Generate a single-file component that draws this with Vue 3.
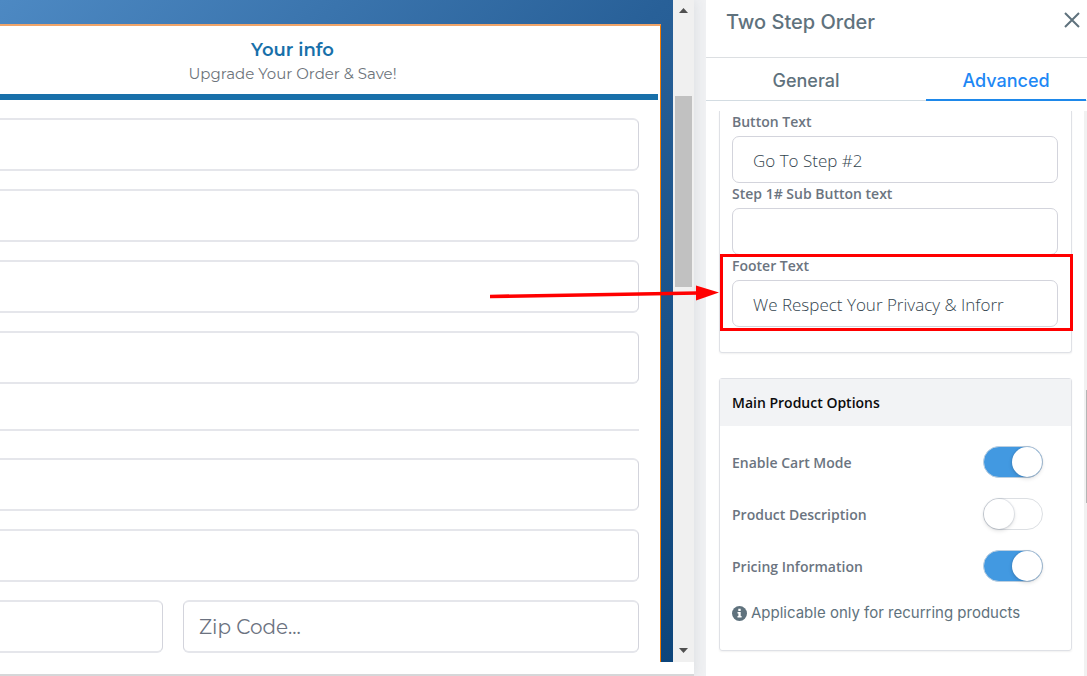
<script setup>
import { ref, reactive } from 'vue'

const fields = reactive(['', '', '', ''])
const address = reactive(['', ''])
const state = ref('')
const zip = ref('')

const activeTab = ref('Advanced')
const buttonText = ref('Go To Step #2')
const subButtonText = ref('')
const footerText = ref('We Respect Your Privacy & Inforr')

const options = reactive([
  { id: 'cart-mode', label: 'Enable Cart Mode', on: true },
  { id: 'description', label: 'Product Description', on: false },
  { id: 'pricing', label: 'Pricing Information', on: true },
])
</script>

<template>
  <div class="editor">
    <main class="preview">
      <div class="viewport">
        <div class="stage">
          <section class="order">
            <header class="step">
              <h2>Your info</h2>
              <p>Upgrade Your Order &amp; Save!</p>
            </header>
            <form class="form" @submit.prevent>
              <input v-for="(f, i) in fields" :key="'f' + i" v-model="fields[i]" class="field wide" type="text" :aria-label="'Contact field ' + (i + 1)" />
              <hr class="wide" />
              <input v-for="(f, i) in address" :key="'a' + i" v-model="address[i]" class="field wide" type="text" :aria-label="'Address field ' + (i + 1)" />
              <input v-model="state" class="field" type="text" aria-label="State" />
              <input v-model="zip" class="field" type="text" placeholder="Zip Code..." aria-label="Zip Code" />
            </form>
          </section>
        </div>
        <div class="scrollbar" aria-hidden="true">
          <svg width="9" height="5" viewBox="0 0 9 5"><path d="M4.500 0 9 5H0z" fill="#505050" /></svg>
          <div class="track"><div class="thumb"></div></div>
          <svg width="9" height="5" viewBox="0 0 9 5"><path d="M0 0h9L4.500 5z" fill="#505050" /></svg>
        </div>
      </div>
    </main>

    <aside class="panel">
      <header class="panel-head">
        <h1>Two Step Order</h1>
        <button class="close" type="button" aria-label="Close">
          <svg width="16" height="16" viewBox="0 0 16 16"><path d="M1 1 15 15M15 1 1 15" fill="none" stroke="#5f727d" stroke-width="2" /></svg>
        </button>
      </header>
      <nav class="tabs">
        <button type="button" class="tab general" :class="{ active: activeTab === 'General' }" @click="activeTab = 'General'">General</button>
        <button type="button" class="tab advanced" :class="{ active: activeTab === 'Advanced' }" @click="activeTab = 'Advanced'">Advanced</button>
      </nav>

      <div class="panel-body">
        <div class="settings">
          <section class="box texts">
            <div class="setting">
              <label for="button-text">Button Text</label>
              <input id="button-text" v-model="buttonText" type="text" />
            </div>
            <div class="setting">
              <label for="sub-text">Step 1# Sub Button text</label>
              <input id="sub-text" v-model="subButtonText" type="text" />
            </div>
            <div class="setting marked">
              <label for="footer-text">Footer Text</label>
              <input id="footer-text" v-model="footerText" type="text" />
              <div class="outline"></div>
              <svg class="arrow" width="229" height="16" viewBox="0 0 229 16" aria-hidden="true">
                <path d="M0 11.500 208 8" stroke="#f00" stroke-width="3.600" />
                <path d="M206 0.500 229 7.500 206 15.500z" fill="#f00" />
              </svg>
            </div>
          </section>

          <section class="box">
            <h3>Main Product Options</h3>
            <div class="options">
              <div v-for="o in options" :key="o.id" class="option">
                <label :for="o.id">{{ o.label }}</label>
                <input :id="o.id" v-model="o.on" class="switch" type="checkbox" role="switch" />
              </div>
              <p class="note">
                <svg width="15" height="15" viewBox="0 0 15 15" aria-hidden="true">
                  <circle cx="7.500" cy="7.500" r="7.500" fill="#5f727d" />
                  <path d="M6.300 2.800h2.400v2.200H6.300zM5.500 6h3.200v4h.9v1.500H5.500V10h.9V7.500h-.9z" fill="#fff" />
                </svg>
                <span>Applicable only for recurring products</span>
              </p>
            </div>
          </section>
        </div>
        <div class="rail" aria-hidden="true"><div class="rail-thumb"></div></div>
      </div>
    </aside>
  </div>
</template>

<style>
body {
  margin: 0;
  background: #f0f1f3;
}
</style>

<style scoped>
* {
  box-sizing: border-box;
}
h1, h2, h3, p {
  margin: 0;
}
button, input {
  font: inherit;
  color: inherit;
}
.editor {
  display: flex;
  min-height: 100vh;
  overflow: hidden;
  font-family: Inter, "Liberation Sans", sans-serif;
  color: #5f727d;
}

.preview {
  flex: 1;
  min-width: 0;
  display: flex;
  margin-right: 12px;
  padding-bottom: 12px;
  background: #fff;
  border-bottom: 2px solid #d6d7d9;
  box-shadow: 0 0 12px rgba(60, 70, 90, 0.12);
}
.viewport {
  flex: 1;
  min-width: 0;
  display: flex;
}
.stage {
  flex: 1;
  min-width: 0;
  display: flex;
  overflow: hidden;
  padding: 24px 12px 0 0;
  background: linear-gradient(135deg, #4d89c3 0%, #286098 50%, #0d457b 100%);
}
.order {
  flex: 1;
  min-width: 0;
  background: #fff;
  border-top: 2px solid #f0a469;
  border-right: 1px solid #f57c00;
}
.step {
  margin: 0 2px 0 -73px;
  padding: 12px 0 8px;
  border-bottom: 6px solid #1870aa;
  text-align: center;
}
.step h2 {
  font: 600 18px/24px Montserrat, Inter, sans-serif;
  color: #1870aa;
}
.step p {
  font: 400 15px/24px Montserrat, Inter, sans-serif;
  color: #6d747b;
}
.form {
  display: grid;
  grid-template-columns: 1fr 1fr;
  gap: 18px 20px;
  margin: 0 21px 0 -293px;
  padding: 18px 0 8px;
}
.wide {
  grid-column: 1 / -1;
}
.field {
  width: 100%;
  min-width: 0;
  height: 53px;
  padding: 0 15px;
  border: 1px solid #d5d6de;
  border-width: 2px 1px;
  border-color: #e5e6eb #d3d4dc;
  border-radius: 6px;
  background: #fff;
  font: 400 20px/24px Montserrat, Inter, sans-serif;
}
.field::placeholder {
  color: #6b7280;
  opacity: 1;
}
hr {
  width: 100%;
  height: 2px;
  margin: 27px 0 9px;
  border: 0;
  background: #e5e6eb;
}
.scrollbar {
  width: 21px;
  display: flex;
  flex-direction: column;
  align-items: center;
  padding: 8px 0 9px;
  background: #f0f0f0;
}
.track {
  flex: 1;
  width: 17px;
  padding-top: 83px;
}
.thumb {
  height: 191px;
  background: #c1c1c1;
}

.panel {
  position: relative;
  width: 381px;
  flex: none;
  display: flex;
  flex-direction: column;
  background: #fff;
}
.panel-head {
  display: flex;
  justify-content: space-between;
  align-items: center;
  height: 58px;
  padding: 0 7px 14px 20px;
  border-bottom: 1px solid #dcdfe2;
}
.panel-head h1 {
  font-size: 20px;
  line-height: 24px;
  font-weight: 500;
}
.close {
  display: flex;
  padding: 0;
  margin-bottom: 4px;
  border: 0;
  background: none;
}
.tabs {
  display: flex;
  height: 43px;
  padding-right: 1px;
  box-shadow: inset 0 -1px #d3dce2;
}
.tab {
  padding: 5px 0 0;
  border: 0;
  border-bottom: 2px solid transparent;
  background: none;
  font-size: 18px;
  line-height: 24px;
  font-weight: 500;
}
.general {
  flex: 1;
  margin-right: 20px;
}
.advanced {
  width: 160px;
}
.tab.active {
  color: #1e88f5;
  border-bottom-color: #1e88ea;
}
.panel-body {
  flex: 1;
  display: flex;
  margin-top: 10px;
}
.settings {
  flex: 1;
  min-width: 0;
  padding: 0 12px 25px 13px;
}
.rail {
  width: 3px;
  padding: 279px 0 0 2px;
  background: #f1f1f1;
}
.rail-thumb {
  height: 113px;
  background: #b5b5b5;
}
.box {
  margin-bottom: 25px;
  border: 1px solid #dfe1e6;
  border-radius: 3px;
  box-shadow: 0 1px 2px rgba(0, 0, 0, 0.06);
}
.box:last-child {
  margin-bottom: 0;
}
.texts {
  padding: 0 13px 25px 12px;
  border-top: 0;
  border-radius: 0 0 3px 3px;
}
.setting label,
.option label,
.box h3 {
  font: 600 14px/22px "Open Sans", "Noto Sans", sans-serif;
  color: #6b7480;
}
.setting label {
  display: block;
  padding-bottom: 3px;
}
.option label {
  padding-top: 2px;
}
.setting input {
  display: block;
  width: 100%;
  height: 47px;
  padding: 2px 20px 0;
  border: 1px solid #d3d4dc;
  border-radius: 7px;
  background: #fff;
  font: 300 17px/24px "Open Sans", "Noto Sans", sans-serif;
  color: #33444e;
}
.marked {
  position: relative;
}
.outline {
  position: absolute;
  inset: -1px -15px -4px -12px;
  border: 3px solid #f00;
  pointer-events: none;
}
.arrow {
  position: absolute;
  top: 30px;
  right: calc(100% + 13px);
  pointer-events: none;
}
.box h3 {
  padding: 13px 12px 12px;
  background: #f2f3f5;
  color: #0b0b0c;
}
.options {
  padding: 10px 28px 16px 12px;
}
.option {
  display: flex;
  justify-content: space-between;
  align-items: center;
  height: 52px;
}
.switch {
  appearance: none;
  width: 60px;
  height: 32px;
  margin: 0;
  padding: 0;
  border: 1px solid #dcdfe3;
  border-radius: 16px;
  background: #fff;
}
.switch::before {
  content: "";
  display: block;
  width: 30px;
  height: 30px;
  border-radius: 50%;
  background: #fff;
  box-shadow: 0 0 1px 1px rgba(70, 90, 120, 0.15), 0 2px 4px rgba(0, 0, 0, 0.12);
}
.switch:checked {
  background: #4299e1;
  border-color: #bccfe0;
}
.switch:checked::before {
  margin-left: 28px;
}
.note {
  display: flex;
  align-items: center;
  gap: 4px;
  height: 42px;
  font-size: 15px;
  line-height: 22px;
}
</style>
